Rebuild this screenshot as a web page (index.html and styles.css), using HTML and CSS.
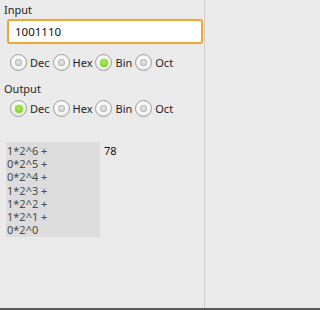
FILE: index.html
```html
<!DOCTYPE html>
<html>
<head>
<meta charset="utf-8">
<link rel="stylesheet" href="styles.css">
</head>
<body>
<div class="screen">
  <div class="label">Input</div>
  <div class="input">1001110</div>
  <div class="radios first">
    <span class="radio"><span class="dot"></span></span><span class="rtext">Dec</span>
    <span class="radio"><span class="dot"></span></span><span class="rtext">Hex</span>
    <span class="radio on"><span class="dot"></span></span><span class="rtext">Bin</span>
    <span class="radio"><span class="dot"></span></span><span class="rtext">Oct</span>
  </div>
  <div class="label out">Output</div>
  <div class="radios second">
    <span class="radio on"><span class="dot"></span></span><span class="rtext">Dec</span>
    <span class="radio"><span class="dot"></span></span><span class="rtext">Hex</span>
    <span class="radio"><span class="dot"></span></span><span class="rtext">Bin</span>
    <span class="radio"><span class="dot"></span></span><span class="rtext">Oct</span>
  </div>
  <div class="result">
    <div class="steps">1*2^6 +<br>0*2^5 +<br>0*2^4 +<br>1*2^3 +<br>1*2^2 +<br>1*2^1 +<br>0*2^0</div>
    <div class="value">78</div>
  </div>
</div>
</body>
</html>
```
FILE: styles.css
```css
html, body {
  margin: 0;
  padding: 0;
  background: #eaeaea;
}
body {
  height: 310px;
  overflow: hidden;
  background: linear-gradient(#eaeaea 0 308px, #5a5a5a 308px);
}
.screen {
  box-sizing: border-box;
  width: 205px;
  height: 308px;
  border-right: 1px solid #cfcfcf;
  font-family: "Noto Sans", "Open Sans", sans-serif;
  font-size: 11px;
  color: #1e1e1e;
  overflow: hidden;
}
.label {
  padding: 2px 0 0 4px;
  line-height: 15px;
  height: 15px;
}
.label.out {
  padding-top: 10px;
}
.input {
  box-sizing: border-box;
  margin: 2px 0 0 7px;
  width: 196px;
  height: 25px;
  border: 2px solid #efa53a;
  border-radius: 3px;
  background: #fff;
  box-shadow: 0 0 1px #f3c888;
  font-size: 11.5px;
  line-height: 21px;
  padding-left: 6px;
  color: #111;
}
.radios {
  display: flex;
  align-items: center;
  padding-left: 10px;
  height: 17px;
}
.radios.first {
  margin-top: 10px;
}
.radios.second {
  margin-top: 4px;
}
.radio {
  box-sizing: border-box;
  width: 17px;
  height: 17px;
  border-radius: 50%;
  border: 1px solid #9d9d9d;
  background: radial-gradient(circle at 50% 40%, #ffffff 0, #f4f4f4 55%, #d8d8d8 100%);
  display: flex;
  align-items: center;
  justify-content: center;
  flex: none;
}
.dot {
  width: 7px;
  height: 7px;
  border-radius: 50%;
  background: radial-gradient(circle at 50% 40%, #e6e6e6, #c4c4c4);
  box-shadow: inset 0 0 0 1px #bdbdbd;
}
.radio.on .dot {
  width: 8px;
  height: 8px;
  background: radial-gradient(circle at 50% 40%, #b4ee5a, #6cc21c);
  box-shadow: 0 0 2px #9de04a;
}
.rtext {
  margin: 0 3px 0 3px;
  line-height: 17px;
}
.result {
  display: flex;
  align-items: flex-start;
  margin-top: 25px;
  padding-left: 6px;
}
.steps {
  box-sizing: border-box;
  width: 94px;
  height: 95px;
  background: #dcdcdc;
  padding: 2px 0 0 1px;
  line-height: 13.2px;
  color: #4a4a4a;
}
.value {
  margin-left: 4px;
  padding-top: 2px;
  line-height: 13.2px;
  color: #111;
}
```
